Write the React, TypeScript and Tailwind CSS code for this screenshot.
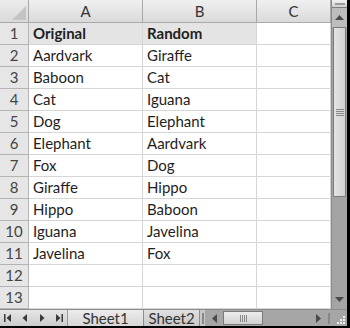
import React from "react";

const rows: [string, string][] = [
  ["Original", "Random"],
  ["Aardvark", "Giraffe"],
  ["Baboon", "Cat"],
  ["Cat", "Iguana"],
  ["Dog", "Elephant"],
  ["Elephant", "Aardvark"],
  ["Fox", "Dog"],
  ["Giraffe", "Hippo"],
  ["Hippo", "Baboon"],
  ["Iguana", "Javelina"],
  ["Javelina", "Fox"],
  ["", ""],
  ["", ""],
];

const ColHeader = ({ label }: { label: string }) => (
  <div className="h-[23px] flex items-center justify-center bg-gradient-to-b from-[#f0f0f0] to-[#dadada] border-r border-b border-[#a9a9a9] text-[15px] text-[#333]">
    {label}
  </div>
);

const Cell = ({ text, bold, shaded }: { text: string; bold?: boolean; shaded?: boolean }) => (
  <div
    className={`h-[22px] flex items-center pl-[4px] border-r border-b border-[#d6d6d6] text-[15px] text-[#1e1e1e] ${
      bold ? "font-bold" : ""
    } ${shaded ? "bg-[#e4e4e4]" : "bg-white"}`}>
    {text}
  </div>
);

const VScrollbar = () => (
  <div className="w-[16px] flex flex-col bg-[#a4a4a4] border-l border-[#8a8a8a]">
    <div className="h-[8px] bg-gradient-to-b from-[#f2f2f2] to-[#cfcfcf] border-b border-[#7c7c7c] flex items-center justify-center">
      <div className="w-[10px] h-[2px] bg-[#9a9a9a]" />
    </div>
    <div className="h-[19px] bg-[#bdbdbd] flex items-center justify-center">
      <svg width="9" height="5" viewBox="0 0 9 5">
        <path d="M0 5 L4.5 0 L9 5 Z" fill="#4a4a4a" />
      </svg>
    </div>
    <div className="h-[170px] mx-[1px] bg-gradient-to-r from-[#e4e4e4] to-[#d2d2d2] border border-[#7a7a7a] rounded-[1px] flex items-center justify-center">
      <div className="flex flex-col gap-[1px]">
        <div className="w-[8px] h-[1px] bg-[#8a8a8a]" />
        <div className="w-[8px] h-[1px] bg-[#8a8a8a]" />
        <div className="w-[8px] h-[1px] bg-[#8a8a8a]" />
        <div className="w-[8px] h-[1px] bg-[#8a8a8a]" />
      </div>
    </div>
    <div className="flex-1" />
    <div className="h-[19px] flex items-center justify-center">
      <svg width="9" height="5" viewBox="0 0 9 5">
        <path d="M0 0 L4.5 5 L9 0 Z" fill="#4a4a4a" />
      </svg>
    </div>
  </div>
);

const Nav = ({ d }: { d: string }) => (
  <div className="w-[17px] h-full flex items-center justify-center">
    <svg width="8" height="8" viewBox="0 0 8 8">
      <path d={d} fill="#3a3a3a" />
    </svg>
  </div>
);

const BottomBar = () => (
  <div className="h-[17px] flex bg-[#a6a6a6] border-t border-[#8c8c8c]">
    <div className="w-[68px] flex items-center bg-gradient-to-b from-[#e6e6e6] to-[#cccccc] border-r border-[#9a9a9a]">
      <Nav d="M0 0 H1.5 V8 H0 Z M7 0 V8 L2.5 4 Z" />
      <Nav d="M6 0 V8 L1.5 4 Z" />
      <Nav d="M2 0 V8 L6.5 4 Z" />
      <Nav d="M1 0 V8 L5.5 4 Z M6.5 0 H8 V8 H6.5 Z" />
    </div>
    <div className="w-[76px] flex items-center justify-center bg-gradient-to-b from-[#ececec] to-[#d6d6d6] border-r border-[#8c8c8c] text-[15px] text-[#333]">
      Sheet1
    </div>
    <div className="w-[56px] flex items-center justify-center bg-gradient-to-b from-[#e0e0e0] to-[#c9c9c9] border-r border-[#8c8c8c] text-[15px] text-[#333]">
      Sheet2
    </div>
    <div className="w-[5px] flex items-center justify-center bg-[#c8c8c8]">
      <div className="w-[2px] h-[11px] bg-[#f4f4f4] border border-[#888]" />
    </div>
    <div className="w-[18px] flex items-center justify-center">
      <svg width="5" height="9" viewBox="0 0 5 9">
        <path d="M5 0 V9 L0 4.5 Z" fill="#4a4a4a" />
      </svg>
    </div>
    <div className="w-[40px] my-[1px] bg-gradient-to-b from-[#ececec] to-[#d2d2d2] border border-[#7a7a7a] flex items-center justify-center gap-[1px]">
      <div className="w-[1px] h-[7px] bg-[#8a8a8a]" />
      <div className="w-[1px] h-[7px] bg-[#8a8a8a]" />
      <div className="w-[1px] h-[7px] bg-[#8a8a8a]" />
      <div className="w-[1px] h-[7px] bg-[#8a8a8a]" />
    </div>
    <div className="flex-1" />
    <div className="w-[16px] flex items-center justify-center">
      <svg width="5" height="9" viewBox="0 0 5 9">
        <path d="M0 0 V9 L5 4.5 Z" fill="#4a4a4a" />
      </svg>
    </div>
    <div className="w-[5px] flex items-center justify-center">
      <div className="w-[2px] h-[11px] bg-[#f4f4f4] border border-[#888]" />
    </div>
    <div className="w-[16px] flex items-end justify-end p-[2px] bg-[#a6a6a6]">
      <svg width="9" height="9" viewBox="0 0 9 9">
        <rect x="7" y="1" width="2" height="2" fill="#f2f2f2" />
        <rect x="4" y="4" width="2" height="2" fill="#f2f2f2" />
        <rect x="7" y="4" width="2" height="2" fill="#f2f2f2" />
        <rect x="1" y="7" width="2" height="2" fill="#f2f2f2" />
        <rect x="4" y="7" width="2" height="2" fill="#f2f2f2" />
        <rect x="7" y="7" width="2" height="2" fill="#f2f2f2" />
      </svg>
    </div>
  </div>
);

export default function App() {
  return (
    <div className="w-[350px] h-[328px] overflow-hidden bg-black" style={{ fontFamily: "Lato, 'Liberation Sans', sans-serif" }}>
      <div className="w-[347px] h-[326px] flex flex-col bg-white">
        <div className="flex h-[309px]">
          <div className="grid grid-cols-[29px_114px_114px_74px] content-start w-[331px]">
            <div className="h-[23px] bg-gradient-to-b from-[#ececec] to-[#dadada] border-r border-b border-[#a9a9a9] relative overflow-hidden">
              <svg className="absolute right-[2px] bottom-[2px]" width="14" height="14" viewBox="0 0 14 14">
                <path d="M14 0 V14 H0 Z" fill="#c4c4c4" />
              </svg>
            </div>
            <ColHeader label="A" />
            <ColHeader label="B" />
            <ColHeader label="C" />
            {rows.map((r, i) => (
              <React.Fragment key={i}>
                <div className="h-[22px] flex items-center justify-center bg-[#e6e6e6] border-r border-b border-[#b4b4b4] text-[15px] text-[#444]">
                  {i + 1}
                </div>
                <Cell text={r[0]} bold={i === 0} shaded={i === 0} />
                <Cell text={r[1]} bold={i === 0} shaded={i === 0} />
                <Cell text="" />
              </React.Fragment>
            ))}
          </div>
          <VScrollbar />
        </div>
        <BottomBar />
      </div>
    </div>
  );
}
